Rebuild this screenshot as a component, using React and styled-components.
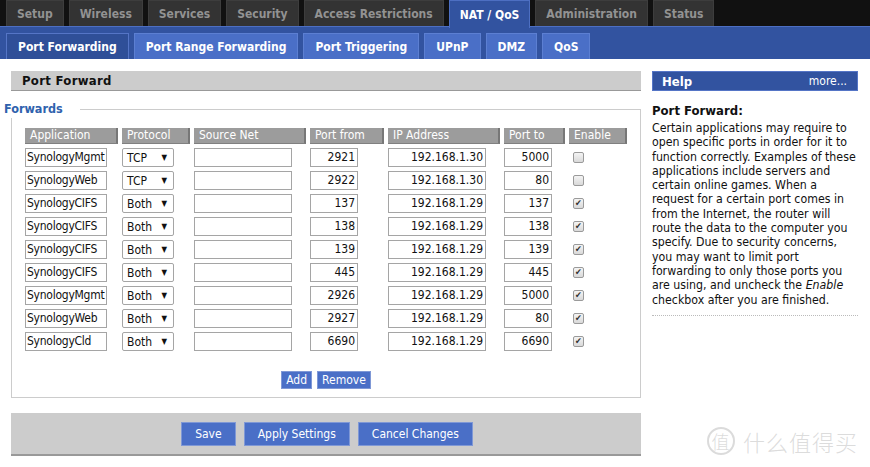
import React from "react";
import styled, { createGlobalStyle } from "styled-components";

const GlobalStyle = createGlobalStyle`
  body {
    margin: 0;
    background: #fff;
    font-family: "DejaVu Sans Condensed", "DejaVu Sans", Tahoma, sans-serif;
    font-size: 12px;
    color: #000;
  }
`;

const Page = styled.div`
  width: 870px;
  height: 467px;
  position: relative;
  overflow: hidden;
`;

const TopBar = styled.div`
  display: flex;
  gap: 5px;
  height: 26px;
  padding-left: 6px;
  background: #111;
`;

const Tab = styled.div`
  display: flex;
  align-items: center;
  padding: 0 10px;
  height: ${(p) => (p.$active ? "27px" : "25px")};
  background: ${(p) => (p.$active ? "#3253a0" : "#333")};
  border: 1px solid ${(p) => (p.$active ? "#4d6fc2" : "#3d3d3d")};
  border-bottom: none;
  color: ${(p) => (p.$active ? "#fff" : "#929292")};
  font-weight: bold;
  font-size: 12px;
  z-index: 1;
`;

const SubBar = styled.div`
  display: flex;
  align-items: flex-end;
  gap: 5px;
  height: 33px;
  padding-left: 6px;
  background: #3253a0;
  border-top: 1px solid #4d6fc2;
  box-sizing: border-box;
`;

const SubTab = styled.div`
  display: flex;
  align-items: center;
  height: 26px;
  padding: 0 11px;
  box-sizing: border-box;
  background: ${(p) => (p.$active ? "#2f4f98" : "#4a6fc7")};
  border: 1px solid ${(p) => (p.$active ? "#5575c6" : "#5c7fd2")};
  border-bottom: none;
  color: #fff;
  font-weight: bold;
  font-size: 12px;
`;

const Main = styled.div`
  display: flex;
  gap: 11px;
  padding: 12px 0 0 11px;
`;

const Content = styled.div`
  width: 630px;
`;

const SectionBar = styled.div`
  height: 20px;
  background: #ccc;
  border-bottom: 1px solid #999;
  box-sizing: border-box;
  padding-left: 11px;
  display: flex;
  align-items: center;
  font-weight: bold;
  font-size: 13px;
  color: #111;
  letter-spacing: 0.3px;
`;

const LegendRow = styled.div`
  display: flex;
  align-items: flex-end;
  height: 18px;
  margin-top: 9px;
`;

const LegendText = styled.span`
  margin-left: -7px;
  padding-right: 17px;
  color: #2f62ad;
  font-weight: bold;
  font-size: 12.5px;
  line-height: 18px;
  align-self: center;
`;

const LegendLine = styled.div`
  flex: 1;
  height: 8px;
  border-top: 1px solid #ccc;
  border-right: 1px solid #ccc;
`;

const FieldBox = styled.div`
  border: 1px solid #ccc;
  border-top: none;
  padding: 10px 0 8px 13px;
  height: 280px;
  box-sizing: border-box;
  display: flex;
  flex-direction: column;
`;

const Grid = styled.div`
  display: grid;
  grid-template-columns: 93px 68px 112px 74px 112px 61px 58px;
  column-gap: 4px;
  row-gap: 4px;
  grid-auto-rows: 19px;
  grid-template-rows: 16px;
`;

const HeadCell = styled.div`
  height: 16px;
  background: #9c9c9c;
  border-right: 2px solid #777;
  border-bottom: 1px solid #808080;
  box-sizing: border-box;
  color: #fff;
  padding-left: 5px;
  line-height: 15px;
  font-size: 12px;
  white-space: nowrap;
`;

const TextBox = styled.div`
  width: ${(p) => p.$w}px;
  height: 19px;
  box-sizing: border-box;
  border: 1px solid #a5a5a5;
  background: #fff;
  text-align: ${(p) => (p.$right ? "right" : "left")};
  padding: 0 2px 0 1px;
  line-height: 17px;
  font-size: 12px;
  letter-spacing: ${(p) => (p.$right ? "0" : "-0.25px")};
  color: #111;
  white-space: nowrap;
  overflow: hidden;
`;

const Select = styled.div`
  width: 52px;
  height: 19px;
  box-sizing: border-box;
  border: 1px solid #a5a5a5;
  border-radius: 2px;
  display: flex;
  align-items: center;
  justify-content: space-between;
  padding: 0 6px 0 4px;
  font-size: 12px;
  color: #111;
`;

const Arrow = styled.span`
  font-size: 8px;
  color: #111;
`;

const CheckCell = styled.div`
  display: flex;
  align-items: center;
  padding-left: 4px;
`;

const Check = styled.div`
  width: 11px;
  height: 11px;
  box-sizing: border-box;
  border: 1px solid #9a9a9a;
  border-radius: 2px;
  background: linear-gradient(#f4f4f4, #d9d9d9);
  display: flex;
  align-items: center;
  justify-content: center;
  font-size: 9px;
  line-height: 1;
  color: #333;
`;

const ButtonRow = styled.div`
  display: flex;
  justify-content: center;
  gap: 5px;
  margin-top: auto;
  padding-right: 13px;
`;

const Button = styled.div`
  height: ${(p) => (p.$big ? "24px" : "18px")};
  padding: 0 ${(p) => (p.$big ? "13px" : "4px")};
  background: #4a6fc7;
  border: 1px solid #7f98d6;
  box-sizing: border-box;
  color: #fff;
  font-size: 12px;
  display: flex;
  align-items: center;
`;

const BottomBar = styled.div`
  margin-top: 15px;
  height: 43px;
  background: #ccc;
  border-bottom: 2px solid #999;
  box-sizing: border-box;
  display: flex;
  align-items: center;
  justify-content: center;
  gap: 8px;
  padding-left: 2px;
`;

const Help = styled.div`
  width: 206px;
`;

const HelpBar = styled.div`
  height: 20px;
  background: #3253a0;
  border: 1px solid #5575c6;
  box-sizing: border-box;
  display: flex;
  align-items: center;
  justify-content: space-between;
  padding: 0 10px 0 9px;
  color: #fff;
  font-size: 12px;
`;

const HelpTitle = styled.span`
  font-weight: bold;
  font-size: 13px;
`;

const HelpHead = styled.div`
  margin-top: 12px;
  font-weight: bold;
  font-size: 13px;
  color: #111;
`;

const HelpText = styled.p`
  margin: 3px 0 0;
  padding-right: 1px;
  font-size: 12.25px;
  line-height: 14.3px;
  color: #111;
  padding-bottom: 8px;
  border-bottom: 1px dotted #bbb;
`;

const Watermark = styled.div`
  position: absolute;
  right: 12px;
  bottom: 10px;
  display: flex;
  align-items: center;
  gap: 8px;
  font-family: "Noto Sans CJK SC", sans-serif;
  font-weight: 300;
  font-size: 22px;
  color: rgba(190, 190, 190, 0.55);
  letter-spacing: 1px;
`;

const Circled = styled.span`
  width: 24px;
  height: 24px;
  border: 2px solid rgba(190, 190, 190, 0.55);
  border-radius: 50%;
  display: flex;
  align-items: center;
  justify-content: center;
  font-size: 18px;
`;

const topTabs = ["Setup", "Wireless", "Services", "Security", "Access Restrictions", "NAT / QoS", "Administration", "Status"];
const subTabs = ["Port Forwarding", "Port Range Forwarding", "Port Triggering", "UPnP", "DMZ", "QoS"];
const headers = ["Application", "Protocol", "Source Net", "Port from", "IP Address", "Port to", "Enable"];

const rows = [
  ["SynologyMgmt", "TCP", "2921", "192.168.1.30", "5000", false],
  ["SynologyWeb", "TCP", "2922", "192.168.1.30", "80", false],
  ["SynologyCIFS", "Both", "137", "192.168.1.29", "137", true],
  ["SynologyCIFS", "Both", "138", "192.168.1.29", "138", true],
  ["SynologyCIFS", "Both", "139", "192.168.1.29", "139", true],
  ["SynologyCIFS", "Both", "445", "192.168.1.29", "445", true],
  ["SynologyMgmt", "Both", "2926", "192.168.1.29", "5000", true],
  ["SynologyWeb", "Both", "2927", "192.168.1.29", "80", true],
  ["SynologyCld", "Both", "6690", "192.168.1.29", "6690", true],
];

export default function App() {
  return (
    <Page>
      <GlobalStyle />
      <TopBar>
        {topTabs.map((t) => (
          <Tab key={t} $active={t === "NAT / QoS"}>{t}</Tab>
        ))}
      </TopBar>
      <SubBar>
        {subTabs.map((t) => (
          <SubTab key={t} $active={t === "Port Forwarding"}>{t}</SubTab>
        ))}
      </SubBar>
      <Main>
        <Content>
          <SectionBar>Port Forward</SectionBar>
          <LegendRow>
            <LegendText>Forwards</LegendText>
            <LegendLine />
          </LegendRow>
          <FieldBox>
            <Grid>
              {headers.map((h) => (
                <HeadCell key={h}>{h}</HeadCell>
              ))}
              {rows.map((r, i) => (
                <React.Fragment key={i}>
                  <TextBox $w={82}>{r[0]}</TextBox>
                  <Select>
                    <span>{r[1]}</span>
                    <Arrow>▼</Arrow>
                  </Select>
                  <TextBox $w={98} />
                  <TextBox $w={48} $right>{r[2]}</TextBox>
                  <TextBox $w={98} $right>{r[3]}</TextBox>
                  <TextBox $w={48} $right>{r[4]}</TextBox>
                  <CheckCell>
                    <Check>{r[5] ? "✔" : ""}</Check>
                  </CheckCell>
                </React.Fragment>
              ))}
            </Grid>
            <ButtonRow>
              <Button>Add</Button>
              <Button>Remove</Button>
            </ButtonRow>
          </FieldBox>
          <BottomBar>
            <Button $big>Save</Button>
            <Button $big>Apply Settings</Button>
            <Button $big>Cancel Changes</Button>
          </BottomBar>
        </Content>
        <Help>
          <HelpBar>
            <HelpTitle>Help</HelpTitle>
            <span>more...</span>
          </HelpBar>
          <HelpHead>Port Forward:</HelpHead>
          <HelpText>
            Certain applications may require to open specific ports in order for it to function correctly. Examples of these applications include servers and certain online games. When a request for a certain port comes in from the Internet, the router will route the data to the computer you specify. Due to security concerns, you may want to limit port forwarding to only those ports you are using, and uncheck the <i>Enable</i> checkbox after you are finished.
          </HelpText>
        </Help>
      </Main>
      <Watermark>
        <Circled>值</Circled>
        <span>什么值得买</span>
      </Watermark>
    </Page>
  );
}
